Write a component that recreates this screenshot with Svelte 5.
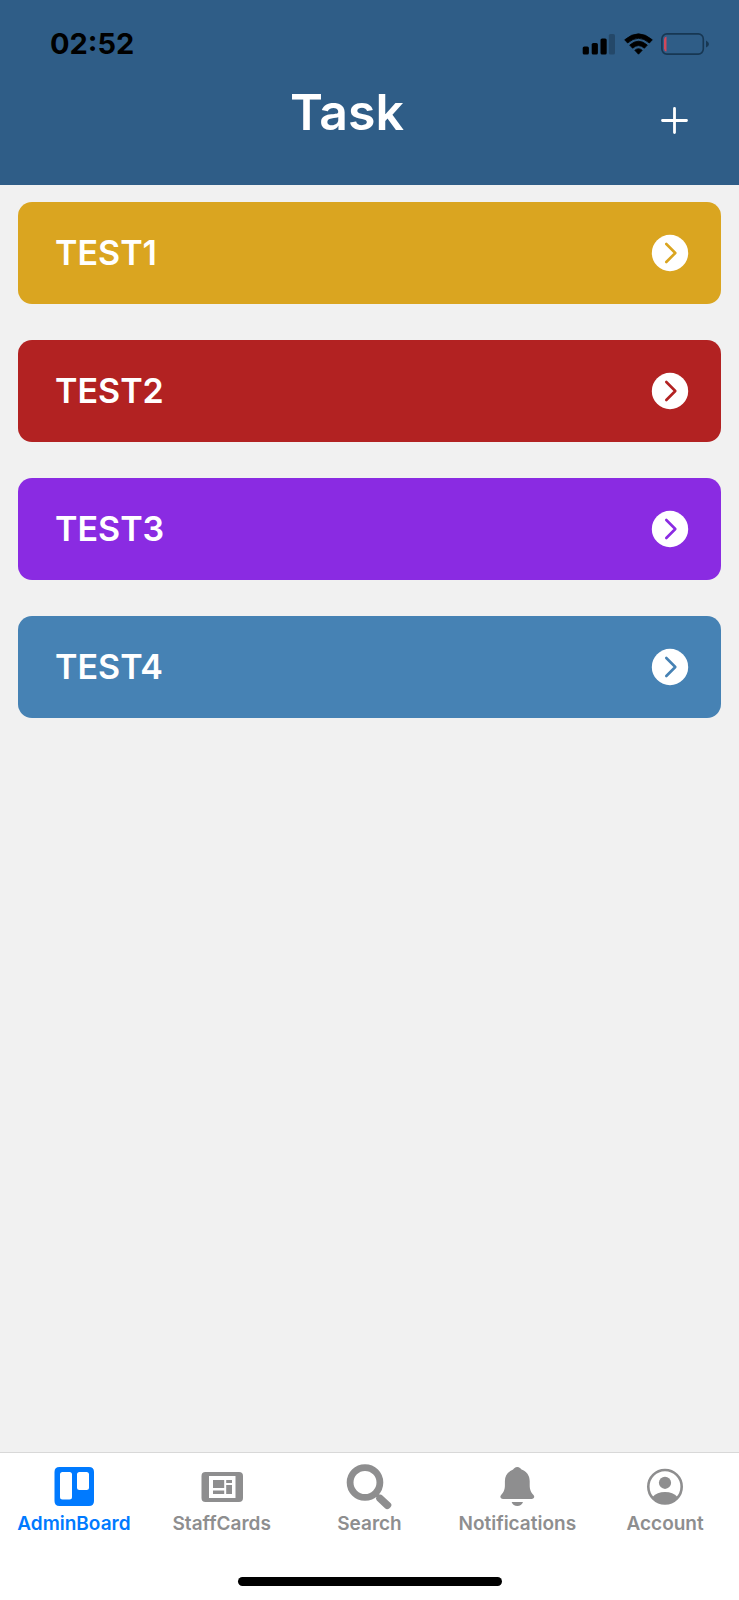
<script>
  const tasks = [
    { name: 'TEST1', color: '#daa520' },
    { name: 'TEST2', color: '#b22222' },
    { name: 'TEST3', color: '#8a2be2' },
    { name: 'TEST4', color: '#4682b4' }
  ];
  const tabs = ['AdminBoard', 'StaffCards', 'Search', 'Notifications', 'Account'];
  let active = $state('AdminBoard');
</script>

<div class="app">
  <header>
    <div class="status">
      <time>02:52</time>
      <div class="indicators">
        <svg width="34" height="22" viewBox="0 0 34 22" aria-hidden="true">
          <rect x="1.700" y="13.500" width="6.200" height="8" rx="1.600" />
          <rect x="10.700" y="10" width="6.200" height="11.500" rx="1.600" />
          <rect x="19.500" y="5.500" width="6.200" height="16" rx="1.600" />
          <rect x="27.800" y="1" width="6.200" height="20.500" rx="1.600" opacity=".22" />
        </svg>
        <svg width="30" height="22" viewBox="0 0 30 22" aria-hidden="true">
          <path d="M1.700 6.800 Q15.500-5.200 29.300 6.800 L26.400 10 Q15.500 .6 4.600 10Z" stroke="#000" stroke-width=".8" stroke-linejoin="round" />
          <path d="M6.700 12.100 Q15.500 4.300 24.300 12.100 L21.400 15.200 Q15.500 10 9.600 15.200Z" stroke="#000" stroke-width=".8" stroke-linejoin="round" />
          <path d="M11.800 17.300 Q15.500 14.100 19.200 17.300 L15.500 21.200Z" stroke="#000" stroke-width=".8" stroke-linejoin="round" />
        </svg>
        <svg width="48" height="22" viewBox="0 0 48 22" aria-hidden="true">
          <rect x=".9" y=".9" width="41.400" height="20.200" rx="5" fill="none" stroke="#173753" stroke-width="1.600" />
          <path d="M45 7.500 Q48 9 48 11 Q48 13 45 14.500Z" fill="#173753" />
          <path d="M5.500 3.500 V18.500 Q3 18 3 15.500 V6.500 Q3 4 5.500 3.500Z" fill="#d2485a" />
        </svg>
      </div>
    </div>
    <div class="titlebar">
      <h1>Task</h1>
      <button class="add" aria-label="Add task">
        <svg width="28" height="28" viewBox="0 0 28 28" aria-hidden="true">
          <path d="M13.500 1.500 V25.500 M1.500 13.500 H25.500" stroke="#fff" stroke-width="2.800" stroke-linecap="round" />
        </svg>
      </button>
    </div>
  </header>

  <main>
    {#each tasks as task}
      <button class="card" style:background={task.color}>
        <span>{task.name}</span>
        <svg width="36" height="36" viewBox="0 0 36 36" aria-hidden="true">
          <circle cx="18" cy="18" r="18.200" fill="#fff" />
          <path d="M14.300 9 L23.300 18 L14.300 27" fill="none" stroke={task.color} stroke-width="2.600" stroke-linecap="round" stroke-linejoin="round" />
        </svg>
      </button>
    {/each}
  </main>

  <footer>
    <nav>
      {#each tabs as tab}
        <button class="tab" class:active={active === tab} onclick={() => (active = tab)}>
          <svg width="48" height="48" viewBox="0 0 48 48" fill="currentColor" aria-hidden="true">
            {#if tab === 'AdminBoard'}
              <path fill-rule="evenodd" d="M9.500 4 H39 Q44 4 44 9 V38 Q44 43 39 43 H9.500 Q4.500 43 4.500 38 V9 Q4.500 4 9.500 4Z M12.500 9 Q10 9 10 11.500 V34 Q10 36.500 12.500 36.500 H19.500 Q22 36.500 22 34 V11.500 Q22 9 19.500 9Z M29.500 9 Q27 9 27 11.500 V24.500 Q27 27 29.500 27 H36.500 Q39 27 39 24.500 V11.500 Q39 9 36.500 9Z" />
            {:else if tab === 'StaffCards'}
              <path fill-rule="evenodd" d="M7.500 9 H41 Q45 9 45 13 V35 Q45 39 41 39 H7.500 Q3.500 39 3.500 35 V13 Q3.500 9 7.500 9Z M11 13 V35 H37.500 V13Z" />
              <path d="M15 17 H26.200 V25 H15Z M15 27.500 H26.200 V31 H15Z M28.200 17 H34 V20 H28.200Z M28.200 22 H34 V31 H28.200Z" />
            {:else if tab === 'Search'}
              <circle cx="20" cy="19.500" r="14.900" fill="none" stroke="currentColor" stroke-width="6.800" />
              <path d="M30 30 L35 35" stroke="currentColor" stroke-width="4" />
              <path d="M33.200 32.600 Q35.300 30.500 37.400 32.400 L45.500 40 Q47.500 42 45.500 44.200 L44.200 45.400 Q42 47 40 45.200 L31.800 37.400 Q30 35.600 31.800 33.800Z" />
            {:else if tab === 'Notifications'}
              <path d="M24.300 4 C26.500 4 27.800 5.500 28.500 6.600 C33.500 8.500 36.700 12.500 36.700 18 V22 C36.700 27 38 29.200 40.500 32 C42.100 34 41 36 38.500 36 H10.100 C7.600 36 6.500 34 8.100 32 C10.600 29.200 11.900 27 11.900 22 V18 C11.900 12.500 15.100 8.500 20.100 6.600 C20.800 5.500 22.100 4 24.300 4Z" />
              <path d="M18.600 39 H30 Q28.500 43 24.300 43 Q20.100 43 18.600 39Z" />
            {:else}
              <circle cx="24" cy="23.700" r="16.700" fill="none" stroke="currentColor" stroke-width="2.600" />
              <circle cx="24" cy="19.800" r="6.100" />
              <path d="M11.500 34 Q16 29 24 29 Q32 29 36.500 34 Q31.500 40.500 24 40.500 Q16.500 40.500 11.500 34Z" />
            {/if}
          </svg>
          <span>{tab}</span>
        </button>
      {/each}
    </nav>
    <div class="home"></div>
  </footer>
</div>

<style>
  :global(body) {
    margin: 0;
    background: #f1f1f1;
  }
  .app {
    min-height: 100vh;
    display: flex;
    flex-direction: column;
    background: #f1f1f1;
    font-family: Inter, 'Liberation Sans', sans-serif;
  }
  button {
    font: inherit;
    border: 0;
    padding: 0;
    background: none;
    cursor: pointer;
  }
  svg {
    display: block;
    flex: none;
    overflow: visible;
  }
  header {
    background: #2f5d87;
    padding-bottom: 32px;
  }
  .status {
    display: flex;
    align-items: center;
    justify-content: space-between;
    height: 48px;
    padding: 20px 30px 12px 50px;
  }
  time {
    font-size: 29px;
    font-weight: 700;
    line-height: 34px;
  }
  .indicators {
    display: flex;
    gap: 8px;
  }
  .titlebar {
    display: grid;
    grid-template-columns: 84px 1fr 129px;
    height: 73px;
  }
  h1 {
    grid-column: 2;
    margin: 0;
    text-align: center;
    color: #fff;
    font-size: 50px;
    font-weight: 600;
    line-height: 64px;
  }
  .add {
    display: flex;
    align-items: flex-end;
    justify-content: center;
    padding-bottom: 18px;
  }
  main {
    flex: 1;
    display: flex;
    flex-direction: column;
    gap: 36px;
    padding: 17px 18px;
  }
  .card {
    display: flex;
    align-items: center;
    justify-content: space-between;
    height: 102px;
    padding: 0 33px 0 37px;
    border-radius: 14px;
    color: #fff;
    font-size: 34px;
    font-weight: 600;
    line-height: 40px;
  }
  footer {
    background: #fff;
    border-top: 1px solid #d8d8d8;
    padding: 10px 0 14px;
  }
  nav {
    display: grid;
    grid-template-columns: repeat(5, 1fr);
  }
  .tab {
    display: flex;
    flex-direction: column;
    align-items: center;
    color: #8e8e8f;
    font-size: 19px;
    font-weight: 600;
    line-height: 26px;
  }
  .tab.active {
    color: #007aff;
  }
  .home {
    width: 264px;
    height: 9px;
    margin: 40px auto 0;
    border-radius: 5px;
    background: #000;
  }
</style>
